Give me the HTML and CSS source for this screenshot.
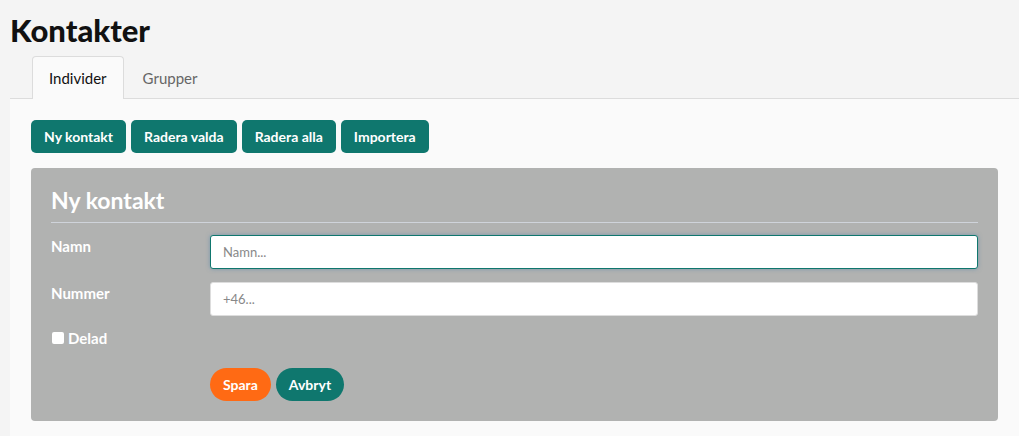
FILE: index.html
```html
<!DOCTYPE html>
<html lang="sv">
<head>
  <meta charset="UTF-8" />
  <meta name="viewport" content="width=device-width, initial-scale=1.0" />
  <title>Kontakter</title>
  <link rel="stylesheet" href="styles.css">
</head>
<body>
  <h1>Kontakter</h1>

  <div class="tabs">
    <a class="tab active" href="#">Individer</a>
    <a class="tab" href="#">Grupper</a>
  </div>

  <div class="content">
    <div class="toolbar">
      <button class="btn">Ny kontakt</button>
      <button class="btn">Radera valda</button>
      <button class="btn">Radera alla</button>
      <button class="btn">Importera</button>
    </div>

    <div class="panel">
      <h2>Ny kontakt</h2>
      <div class="row">
        <label class="label" for="name">Namn</label>
        <input type="text" id="name" class="field focus" placeholder="Namn..." />
      </div>
      <div class="row">
        <label class="label" for="number">Nummer</label>
        <input type="text" id="number" class="field" placeholder="+46..." />
      </div>
      <div class="row check-row">
        <label class="check"><span class="box"></span>Delad</label>
      </div>
      <div class="row actions">
        <span class="label"></span>
        <button class="pill save">Spara</button>
        <button class="pill cancel">Avbryt</button>
      </div>
    </div>
  </div>
</body>
</html>
```

FILE: styles.css
```css
:root {
  --teal: #0f776e;
  --orange: #ff6a14;
  --panel: #b1b2b1;
}
body {
  margin: 0;
  padding: 0 0 0 10px;
  background: #f4f4f4;
  font-family: Lato, 'Open Sans', sans-serif;
  color: #111;
}
h1 {
  margin: 0;
  padding-top: 13px;
  height: 43px;
  font-size: 31px;
  font-weight: 900;
  line-height: 34px;
}
.tabs {
  display: flex;
  padding-left: 22px;
  border-bottom: 1px solid #dcdcdc;
  height: 42px;
}
.tab {
  display: flex;
  align-items: center;
  padding: 0 16px;
  font-size: 15px;
  color: #666;
  text-decoration: none;
  border: 1px solid transparent;
  border-bottom: none;
  border-radius: 4px 4px 0 0;
  margin-bottom: -1px;
}
.tab.active {
  background: #fafafa;
  color: #111;
  border-color: #dcdcdc;
}
.tab + .tab {
  padding-left: 18px;
}
.content {
  background: #fafafa;
  padding: 21px 21px 16px 21px;
}
.toolbar {
  display: flex;
  gap: 5px;
  margin-bottom: 15px;
}
.btn {
  height: 33px;
  padding: 0 13px;
  border: none;
  border-radius: 5px;
  background: var(--teal);
  color: #fff;
  font-family: inherit;
  font-size: 14px;
  font-weight: 700;
  cursor: pointer;
}
.panel {
  background: var(--panel);
  border-radius: 4px;
  padding: 14px 20px 20px 20px;
  max-width: 927px;
}
.panel h2 {
  margin: 0;
  color: #fff;
  font-size: 23px;
  font-weight: 700;
  line-height: 36px;
  padding-bottom: 4px;
  border-bottom: 1px solid #cfd3da;
  margin-bottom: 12px;
}
.row {
  display: flex;
  align-items: flex-start;
  margin-bottom: 13px;
}
.label {
  width: 159px;
  flex: none;
  color: #fff;
  font-size: 15px;
  font-weight: 700;
  padding-top: 2px;
}
.field {
  flex: 1;
  height: 34px;
  box-sizing: border-box;
  border: 1px solid #ddd;
  border-radius: 3px;
  padding: 0 12px;
  font-family: inherit;
  font-size: 13px;
  background: #fff;
}
.field::placeholder {
  color: #888;
}
.field.focus {
  border-color: var(--teal);
  box-shadow: 0 0 4px rgba(100, 140, 170, 0.7);
  outline: none;
}
.check-row {
  margin-top: 5px;
  margin-bottom: 21px;
}
.check {
  display: flex;
  align-items: center;
  gap: 4px;
  color: #fff;
  font-size: 15px;
  font-weight: 700;
  padding-left: 1px;
}
.box {
  width: 12px;
  height: 12px;
  background: #fff;
  border-radius: 2px;
}
.actions {
  gap: 5px;
  margin-bottom: 0;
}
.actions .label {
  width: 154px;
}
.pill {
  height: 33px;
  padding: 0 13px;
  border: none;
  border-radius: 17px;
  color: #fff;
  font-family: inherit;
  font-size: 14px;
  font-weight: 700;
}
.save {
  background: var(--orange);
}
.cancel {
  background: var(--teal);
}
```
